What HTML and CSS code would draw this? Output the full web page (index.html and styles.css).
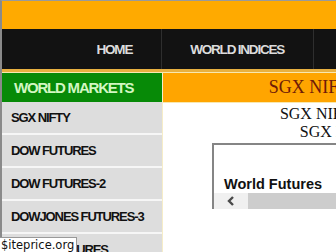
FILE: index.html
```html
<!DOCTYPE html>
<html lang="en">
<head>
  <meta charset="UTF-8" />
  <meta name="viewport" content="width=device-width, initial-scale=1.0" />
  <title>SGX Nifty Live Chart</title>
  <link rel="stylesheet" href="styles.css">
</head>
<body>
  <div class="page">
    <!-- Barra superiore -->
    <div class="topbar"></div>

    <!-- Menu -->
    <nav class="menu">
      <a class="menu-item" href="#">HOME</a>
      <a class="menu-item" href="#">WORLD INDICES</a>
      <a class="menu-item" href="#">COMMODITIES</a>
    </nav>
    <div class="strip"></div>

    <div class="content">
      <!-- Colonna laterale -->
      <aside class="sidebar">
        <div class="side-title">WORLD MARKETS</div>
        <a class="side-item" href="#">SGX NIFTY</a>
        <a class="side-item" href="#">DOW FUTURES</a>
        <a class="side-item" href="#">DOW FUTURES-2</a>
        <a class="side-item" href="#">DOWJONES FUTURES-3</a>
        <a class="side-item" href="#">CRUDE FUTURES</a>
        <a class="side-item" href="#">GOLD FUTURES</a>
      </aside>

      <!-- Contenuto -->
      <main class="main">
        <h1 class="main-title">SGX NIFTY LIVE CHART</h1>
        <p class="sub">SGX NIFTY LIVE CHART<br>SGX NIFTY TODAY</p>
        <div class="chart-box">
          <div class="chart-area">
            <span class="chart-label">World Futures</span>
          </div>
          <div class="scroll">
            <div class="scroll-btn">
              <svg width="10" height="10" viewBox="0 0 10 10">
                <path d="M7 1 L3 5 L7 9" fill="none" stroke="#4a4a4a" stroke-width="2.4" />
              </svg>
            </div>
            <div class="scroll-thumb"></div>
          </div>
        </div>
      </main>
    </div>
  </div>

  <div class="watermark">$iteprice.org</div>
</body>
</html>
```

FILE: styles.css
```css
body {
  margin: 0;
  background-color: #fff;
  overflow: hidden;
}

.page {
  width: 620px;
  border-top: 1px solid #9a9a9a;
  border-left: 2px solid #8a8a8a;
}

.topbar {
  height: 28px;
  background-color: #ffaa00;
}

.menu {
  display: flex;
  height: 40px;
  padding-left: 66px;
  background-color: #121212;
}

.menu-item {
  display: flex;
  align-items: center;
  padding: 0 28.5px;
  border-right: 1px solid #2e2e2e;
  color: #dcdcdc;
  font-family: "Liberation Sans", Arial, sans-serif;
  font-weight: bold;
  font-size: 13.5px;
  letter-spacing: -1.2px;
  white-space: nowrap;
  text-decoration: none;
}

.strip {
  height: 3px;
  background-color: #e8b040;
  border-bottom: 1px solid #f8e8b0;
}

.content {
  display: flex;
  align-items: flex-start;
}

.sidebar {
  width: 160px;
  border-right: 1px solid #f6edc8;
  display: flex;
  flex-direction: column;
}

.side-title {
  height: 29px;
  display: flex;
  align-items: center;
  padding-left: 12px;
  background-color: #078a07;
  color: #d2f7c2;
  font-family: "Liberation Sans", Arial, sans-serif;
  font-weight: bold;
  font-size: 15px;
  letter-spacing: -1.2px;
  white-space: nowrap;
}

.side-item {
  height: 31px;
  display: flex;
  align-items: center;
  padding-left: 9px;
  background-color: #dddddd;
  border-bottom: 2px solid #f6f6f6;
  color: #111;
  font-family: "Liberation Sans", Arial, sans-serif;
  font-weight: bold;
  font-size: 13px;
  letter-spacing: -1.1px;
  white-space: nowrap;
  text-decoration: none;
}

.main {
  width: 414px;
  text-align: center;
}

.main-title {
  margin: 0;
  height: 29px;
  line-height: 29px;
  background-color: #ffa500;
  border-bottom: 1px solid #f8e8b0;
  color: #6e1a08;
  font-family: "Liberation Serif", "Times New Roman", serif;
  font-weight: normal;
  font-size: 18px;
  white-space: nowrap;
}

.sub {
  margin: 2px 0 0;
  line-height: 18px;
  color: #111;
  font-family: "Liberation Serif", "Times New Roman", serif;
  font-size: 16px;
  white-space: nowrap;
}

.chart-box {
  width: 314px;
  margin: 2px auto 0;
  border-top: 2px solid #858585;
  border-left: 2px solid #858585;
  text-align: left;
}

.chart-area {
  height: 48px;
  display: flex;
  align-items: flex-end;
  padding-left: 10px;
}

.chart-label {
  line-height: 16px;
  padding-bottom: 1px;
  color: #111;
  font-family: "Liberation Sans", Arial, sans-serif;
  font-weight: bold;
  font-size: 14.5px;
}

.scroll {
  display: flex;
  height: 16px;
  background-color: #f0f0f0;
}

.scroll-btn {
  width: 34px;
  display: flex;
  align-items: center;
  justify-content: center;
}

.scroll-thumb {
  flex: 1;
  background-color: #cdcdcd;
}

.watermark {
  position: fixed;
  left: 0;
  bottom: 0;
  padding: 0 2px 0 1px;
  height: 14px;
  line-height: 15px;
  background-color: #fff;
  border-top: 1px solid #999;
  border-right: 1px solid #999;
  color: #111;
  font-family: "DejaVu Sans", sans-serif;
  font-size: 11.5px;
}
```
